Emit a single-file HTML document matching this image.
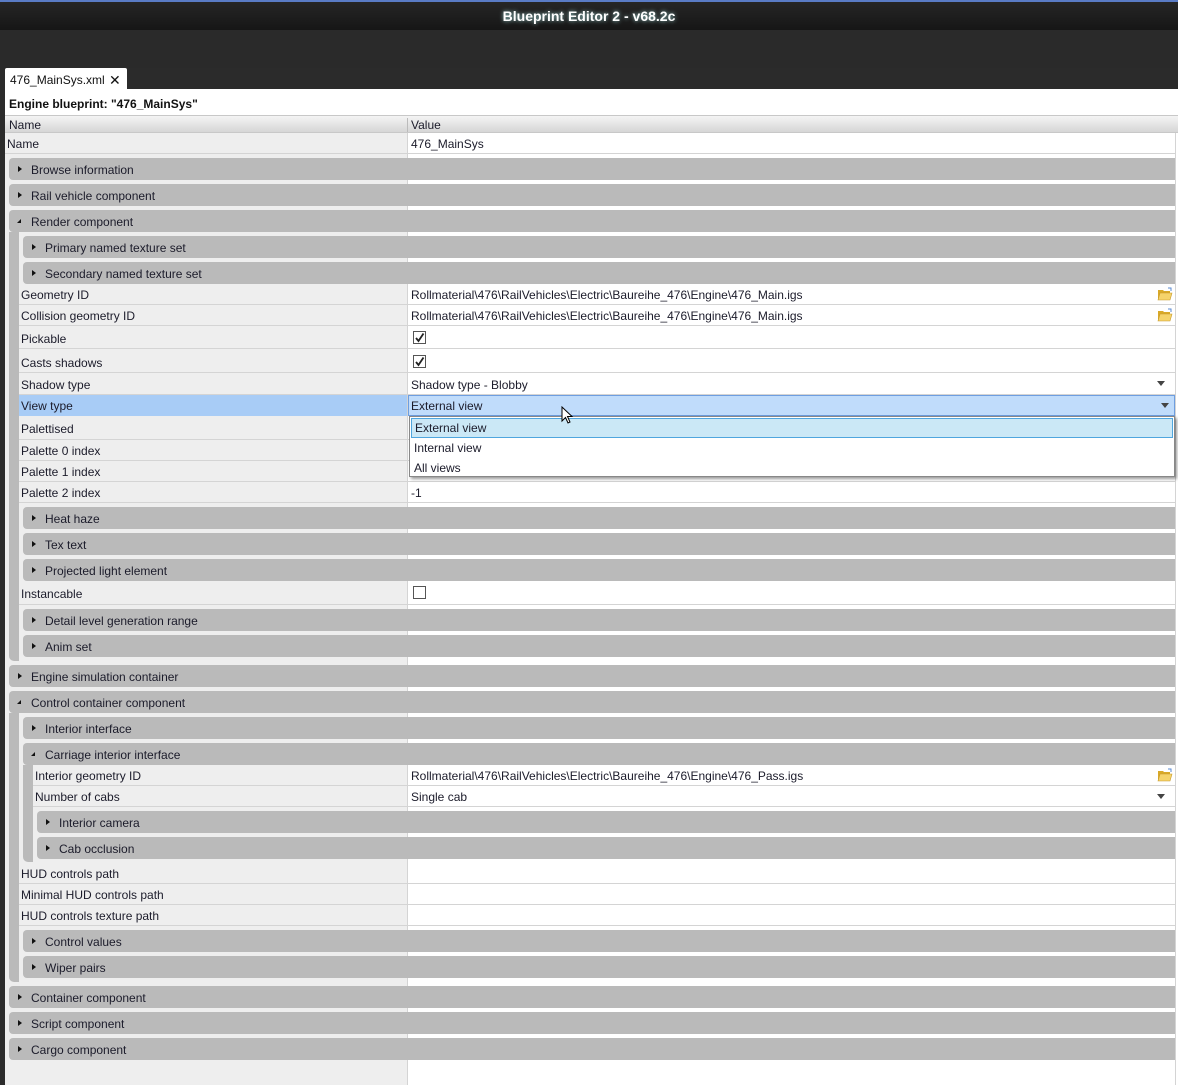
<!DOCTYPE html>
<html><head><meta charset="utf-8"><style>
*{margin:0;padding:0;box-sizing:border-box}
body{width:1178px;height:1085px;overflow:hidden;background:#2b2b2b;font-family:"Liberation Sans",sans-serif;font-size:12px;color:#1b1b2a;position:relative}
.a{position:absolute}
.title{left:0;top:0;width:1178px;height:30px;background:linear-gradient(#262626,#161616);border-top:2px solid #5a7cc6}
.title span{position:absolute;left:0;right:0;top:6px;text-align:center;color:#fff;font-size:14px;font-weight:bold;text-shadow:0 0 4px #9cc}
.g{position:absolute;height:22px;right:3px;background:#bababa;border-radius:4px 0 0 4px;line-height:22px}
.g i{position:absolute;top:8px;width:0;height:0;border-top:3px solid transparent;border-bottom:3px solid transparent;border-left:4px solid #111}
.g i.o{top:9px;border-left:4px solid transparent;border-bottom:4px solid #111;border-top:0}
.g span{position:absolute;top:1px}
.r{position:absolute;right:3px;border-bottom:1px solid #d4d4d4}
.r .n{position:absolute;top:1px;bottom:0;left:0;width:auto;line-height:20px;padding-left:2px}
.r .v{position:absolute;top:1px;bottom:0;left:408px;line-height:20px;padding-left:3px}
.bar{position:absolute;width:10px;background:#bababa;border-radius:0 0 0 5px}
.cb{position:absolute;width:13px;height:13px;border:1px solid #555;background:#fff}
.dd{position:absolute;right:10px;top:8px;border-left:4px solid transparent;border-right:4px solid transparent;border-top:5px solid #444}
</style></head><body>
<div class="a title"><span>Blueprint Editor 2 - v68.2c</span></div>
<div class="a" style="left:0;top:30px;width:1178px;height:38px;background:#2a2a2a"></div>
<div class="a" style="left:5px;top:68px;width:122px;height:21px;background:#fff;border-radius:2px 2px 0 0;line-height:24px;padding-left:5px;color:#111">476_MainSys.xml<span style="position:absolute;left:104px;top:0;font-size:14px">✕</span></div>
<div class="a" style="left:5px;top:89px;width:1173px;height:996px;background:#fff"></div>
<div class="a" style="left:9px;top:97px;font-weight:bold;color:#111">Engine blueprint: "476_MainSys"</div>
<div class="a" style="left:5px;top:115px;width:1173px;height:1px;background:#c8c8c8"></div>
<div class="a" style="left:5px;top:133px;width:402px;height:952px;background:#eeeeee"></div>
<div class="a" style="left:407px;top:116px;width:1px;height:969px;background:#d4d4d4"></div>
<div class="a" style="left:1175px;top:116px;width:1px;height:969px;background:#d4d4d4"></div>
<div class="a" style="left:5px;top:116px;width:1173px;height:17px;background:linear-gradient(#f4f4f4,#d6d6d6);border-bottom:1px solid #c8c8c8"></div>
<div class="a" style="left:9px;top:118px">Name</div>
<div class="a" style="left:411px;top:118px">Value</div>
<div class="a" style="left:407px;top:118px;width:1px;height:14px;background:#bbb"></div>

<div class="r" style="left:5px;top:133px;height:21px"><div class="n">Name</div><div class="v" style="left:403px">476_MainSys</div></div>

<div class="g" style="left:9px;top:158px"><i style="left:9px"></i><span style="left:22px">Browse information</span></div>
<div class="g" style="left:9px;top:184px"><i style="left:9px"></i><span style="left:22px">Rail vehicle component</span></div>
<div class="g" style="left:9px;top:210px"><i class="o" style="left:8px"></i><span style="left:22px">Render component</span></div>
<div class="bar" style="left:9px;top:232px;height:429px"></div>
<div class="g" style="left:23px;top:236px"><i style="left:9px"></i><span style="left:22px">Primary named texture set</span></div>
<div class="g" style="left:23px;top:262px"><i style="left:9px"></i><span style="left:22px">Secondary named texture set</span></div>

<div class="r" style="left:19px;top:284px;height:21px"><div class="n">Geometry ID</div><div class="v" style="left:389px">Rollmaterial\476\RailVehicles\Electric\Baureihe_476\Engine\476_Main.igs</div></div>
<div class="r" style="left:19px;top:305px;height:21px"><div class="n">Collision geometry ID</div><div class="v" style="left:389px">Rollmaterial\476\RailVehicles\Electric\Baureihe_476\Engine\476_Main.igs</div></div>
<div class="r" style="left:19px;top:326px;height:23px"><div class="n" style="line-height:24px">Pickable</div></div>
<div class="r" style="left:19px;top:349px;height:24px"><div class="n" style="line-height:26px">Casts shadows</div></div>
<div class="r" style="left:19px;top:373px;height:22px"><div class="n" style="line-height:23px">Shadow type</div><div class="v" style="left:389px;line-height:23px">Shadow type - Blobby</div><div class="dd"></div></div>
<div class="r" style="left:19px;top:395px;height:21px;border:0"><div class="n" style="background:#a8ccf6;right:768px;top:0;padding-top:1px">View type</div></div>
<div class="a" style="left:408px;top:395px;width:767px;height:21px;background:#c0dcfb;border:1px solid #6e9ee0;line-height:21px;padding-left:2px">External view<div class="dd" style="right:5px;top:7px"></div></div>
<div class="r" style="left:19px;top:416px;height:24px"><div class="n" style="line-height:25px">Palettised</div></div>
<div class="r" style="left:19px;top:440px;height:21px"><div class="n">Palette 0 index</div></div>
<div class="r" style="left:19px;top:461px;height:21px"><div class="n">Palette 1 index</div></div>
<div class="r" style="left:19px;top:482px;height:21px"><div class="n">Palette 2 index</div><div class="v" style="left:389px">-1</div></div>

<div class="g" style="left:23px;top:507px"><i style="left:9px"></i><span style="left:22px">Heat haze</span></div>
<div class="g" style="left:23px;top:533px"><i style="left:9px"></i><span style="left:22px">Tex text</span></div>
<div class="g" style="left:23px;top:559px"><i style="left:9px"></i><span style="left:22px">Projected light element</span></div>
<div class="r" style="left:19px;top:581px;height:24px"><div class="n" style="line-height:25px">Instancable</div></div>
<div class="g" style="left:23px;top:609px"><i style="left:9px"></i><span style="left:22px">Detail level generation range</span></div>
<div class="g" style="left:23px;top:635px"><i style="left:9px"></i><span style="left:22px">Anim set</span></div>

<div class="g" style="left:9px;top:665px"><i style="left:9px"></i><span style="left:22px">Engine simulation container</span></div>
<div class="g" style="left:9px;top:691px"><i class="o" style="left:8px"></i><span style="left:22px">Control container component</span></div>
<div class="bar" style="left:9px;top:713px;height:269px"></div>
<div class="g" style="left:23px;top:717px"><i style="left:9px"></i><span style="left:22px">Interior interface</span></div>
<div class="g" style="left:23px;top:743px"><i class="o" style="left:8px"></i><span style="left:22px">Carriage interior interface</span></div>
<div class="bar" style="left:23px;top:765px;height:97px"></div>
<div class="r" style="left:33px;top:765px;height:21px"><div class="n">Interior geometry ID</div><div class="v" style="left:375px">Rollmaterial\476\RailVehicles\Electric\Baureihe_476\Engine\476_Pass.igs</div></div>
<div class="r" style="left:33px;top:786px;height:21px"><div class="n">Number of cabs</div><div class="v" style="left:375px">Single cab</div><div class="dd"></div></div>
<div class="g" style="left:37px;top:811px"><i style="left:9px"></i><span style="left:22px">Interior camera</span></div>
<div class="g" style="left:37px;top:837px"><i style="left:9px"></i><span style="left:22px">Cab occlusion</span></div>
<div class="r" style="left:19px;top:863px;height:21px"><div class="n">HUD controls path</div></div>
<div class="r" style="left:19px;top:884px;height:21px"><div class="n">Minimal HUD controls path</div></div>
<div class="r" style="left:19px;top:905px;height:21px"><div class="n">HUD controls texture path</div></div>
<div class="g" style="left:23px;top:930px"><i style="left:9px"></i><span style="left:22px">Control values</span></div>
<div class="g" style="left:23px;top:956px"><i style="left:9px"></i><span style="left:22px">Wiper pairs</span></div>

<div class="g" style="left:9px;top:986px"><i style="left:9px"></i><span style="left:22px">Container component</span></div>
<div class="g" style="left:9px;top:1012px"><i style="left:9px"></i><span style="left:22px">Script component</span></div>
<div class="g" style="left:9px;top:1038px"><i style="left:9px"></i><span style="left:22px">Cargo component</span></div>

<div class="cb" style="left:413px;top:331px"><svg width="11" height="11" style="position:absolute;left:0;top:0"><path d="M2 6 L4.5 9 L9.5 1.5" stroke="#222" stroke-width="1.8" fill="none"/></svg></div>
<div class="cb" style="left:413px;top:355px"><svg width="11" height="11" style="position:absolute;left:0;top:0"><path d="M2 6 L4.5 9 L9.5 1.5" stroke="#222" stroke-width="1.8" fill="none"/></svg></div>
<div class="cb" style="left:413px;top:586px"></div>

<svg class="a" style="left:1157px;top:287px" width="16" height="14"><path d="M1 3h5l1 1h6v8H1z" fill="#d9a928"/><path d="M3 6h12l-2 7H1z" fill="#f5d36a" stroke="#c79a2a" stroke-width=".6"/><path d="M11 1l3 0 0 3" stroke="#5a8ad0" fill="none"/></svg>
<svg class="a" style="left:1157px;top:308px" width="16" height="14"><path d="M1 3h5l1 1h6v8H1z" fill="#d9a928"/><path d="M3 6h12l-2 7H1z" fill="#f5d36a" stroke="#c79a2a" stroke-width=".6"/><path d="M11 1l3 0 0 3" stroke="#5a8ad0" fill="none"/></svg>
<svg class="a" style="left:1157px;top:768px" width="16" height="14"><path d="M1 3h5l1 1h6v8H1z" fill="#d9a928"/><path d="M3 6h12l-2 7H1z" fill="#f5d36a" stroke="#c79a2a" stroke-width=".6"/><path d="M11 1l3 0 0 3" stroke="#5a8ad0" fill="none"/></svg>

<div class="a" style="left:409px;top:416px;width:766px;height:61px;background:#fff;border:1px solid #888;box-shadow:2px 2px 3px rgba(0,0,0,.4)">
<div class="a" style="left:1px;top:1px;width:762px;height:20px;background:#cbe8f6;border:1px solid #4fa6de;line-height:19px;padding-left:3px">External view</div>
<div class="a" style="left:4px;top:22px;line-height:19px">Internal view</div>
<div class="a" style="left:4px;top:42px;line-height:19px">All views</div>
</div>
<svg class="a" style="left:561px;top:406px" width="14" height="20"><path d="M1 1 L1 15 L4.5 11.5 L7 17 L9 16 L6.5 10.5 L11 10.5 Z" fill="#fff" stroke="#000" stroke-width="1"/></svg>
</body></html>
